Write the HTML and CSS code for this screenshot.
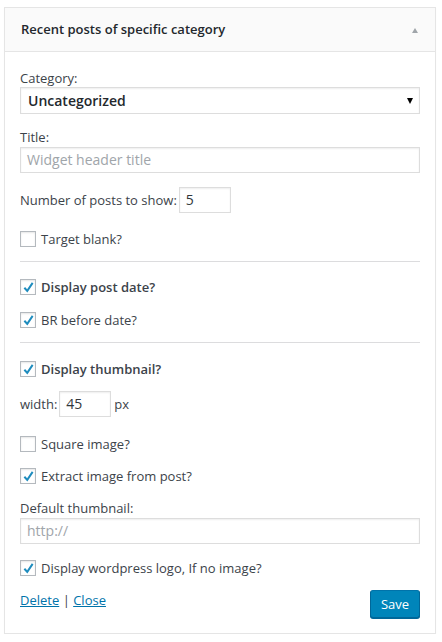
FILE: index.html
```html
<!DOCTYPE html>
<html>
<head>
<meta charset="utf-8">
<link rel="stylesheet" href="styles.css">
</head>
<body>
<div class="widget">
  <div class="widget-top">
    <h3 class="widget-title">Recent posts of specific category</h3>
    <span class="toggle"></span>
  </div>
  <div class="widget-inside">
    <div class="field f-category">
      <label class="lbl">Category:</label>
      <div class="select">Uncategorized<span class="sel-arrow"></span></div>
    </div>
    <div class="field f-title">
      <label class="lbl">Title:</label>
      <div class="input wide placeholder">Widget header title</div>
    </div>
    <div class="inline f-num">
      <span>Number of posts to show:</span>
      <div class="input small">5</div>
    </div>
    <div class="check f-target"><span class="cb"></span><span>Target blank?</span></div>
    <div class="sep sep1"></div>
    <div class="check f-date on bold"><span class="cb"><svg viewBox="0 0 16 16"><path d="M2 8.5 L3.8 6.8 L6.3 9.6 L12.1 1 L14.1 2.4 L6.6 13.6 Z"/></svg></span><span>Display post date?</span></div>
    <div class="check f-br on"><span class="cb"><svg viewBox="0 0 16 16"><path d="M2 8.5 L3.8 6.8 L6.3 9.6 L12.1 1 L14.1 2.4 L6.6 13.6 Z"/></svg></span><span>BR before date?</span></div>
    <div class="sep sep2"></div>
    <div class="check f-thumb on bold"><span class="cb"><svg viewBox="0 0 16 16"><path d="M2 8.5 L3.8 6.8 L6.3 9.6 L12.1 1 L14.1 2.4 L6.6 13.6 Z"/></svg></span><span>Display thumbnail?</span></div>
    <div class="inline f-width">
      <span>width:</span>
      <div class="input small">45</div>
      <span class="px">px</span>
    </div>
    <div class="check f-square"><span class="cb"></span><span>Square image?</span></div>
    <div class="check f-extract on"><span class="cb"><svg viewBox="0 0 16 16"><path d="M2 8.5 L3.8 6.8 L6.3 9.6 L12.1 1 L14.1 2.4 L6.6 13.6 Z"/></svg></span><span>Extract image from post?</span></div>
    <div class="field f-default">
      <label class="lbl">Default thumbnail:</label>
      <div class="input wide placeholder">http://</div>
    </div>
    <div class="check f-logo on"><span class="cb"><svg viewBox="0 0 16 16"><path d="M2 8.5 L3.8 6.8 L6.3 9.6 L12.1 1 L14.1 2.4 L6.6 13.6 Z"/></svg></span><span>Display wordpress logo, If no image?</span></div>
    <div class="controls">
      <div class="links"><a href="#">Delete</a> | <a href="#">Close</a></div>
      <button class="save">Save</button>
    </div>
  </div>
</div>
</body>
</html>
```
FILE: styles.css
```css
html, body {
  margin: 0;
  padding: 0;
  background: #fff;
}
body {
  font-family: "Open Sans", "Liberation Sans", sans-serif;
  font-size: 13px;
  line-height: 18px;
  color: #3c434a;
}
.widget {
  margin: 7px 6px 0 4px;
  border: 1px solid #e5e5e5;
  box-shadow: 0 1px 1px rgba(0,0,0,.04);
  background: #fff;
}
.widget-top {
  height: 43px;
  background: #fafafa;
  border-bottom: 1px solid #e5e5e5;
  display: flex;
  align-items: center;
  justify-content: space-between;
  padding: 0 17px 0 16px;
}
.widget-title {
  margin: 0 0 1px;
  font-size: 13px;
  font-weight: 600;
  color: #23282d;
  line-height: 18px;
}
.toggle {
  width: 0;
  height: 0;
  border-left: 3.5px solid transparent;
  border-right: 3.5px solid transparent;
  border-bottom: 5px solid #a0a5aa;
  margin-top: 1px;
}
.widget-inside {
  padding: 17px 15px 15px;
}
.lbl {
  display: block;
  line-height: 18px;
}
.select {
  position: relative;
  height: 25px;
  border: 1px solid #ddd;
  box-shadow: inset 0 1px 2px rgba(0,0,0,.07);
  font-size: 14px;
  font-weight: 600;
  line-height: 25px;
  padding: 0 7px;
  color: #23282d;
}
.sel-arrow {
  position: absolute;
  right: 6px;
  top: 10px;
  width: 0;
  height: 0;
  border-left: 3px solid transparent;
  border-right: 3px solid transparent;
  border-top: 6px solid #000;
}
.input {
  border: 1px solid #ddd;
  box-shadow: inset 0 1px 2px rgba(0,0,0,.07);
  height: 24px;
  line-height: 24px;
  font-size: 14px;
  padding: 0 6px;
  color: #32373c;
  box-sizing: content-box;
}
.input.wide { margin-top: 1px; }
.input.placeholder { color: #a0a5aa; }
.input.small { width: 38px; }
.f-title { margin-top: 14px; }
.inline {
  display: flex;
  align-items: center;
  gap: 2px;
}
.inline .px { margin-left: 1px; }
.f-num { margin-top: 14px; }
.check {
  display: flex;
  align-items: center;
  gap: 5px;
  height: 18px;
}
.check.bold { font-weight: 600; }
.cb {
  width: 14px;
  height: 14px;
  border: 1px solid #b4b9be;
  box-shadow: inset 0 1px 2px rgba(0,0,0,.1);
  background: #fff;
  display: flex;
  align-items: center;
  justify-content: center;
  flex: none;
}
.cb svg {
  width: 16px;
  height: 16px;
  fill: #1e8cbe;
  margin: 1px 0 0 1px;
}
.f-target { margin-top: 17px; }
.sep {
  height: 1px;
  background: #dcdcde;
}
.sep1 { margin-top: 13px; }
.f-date { margin-top: 16px; }
.f-br { margin-top: 15px; }
.sep2 { margin-top: 13px; }
.f-thumb { margin-top: 17px; }
.f-width { margin-top: 13px; }
.f-square { margin-top: 18px; }
.f-extract { margin-top: 14px; }
.f-default { margin-top: 14px; }
.f-logo { margin-top: 15px; }
.controls {
  margin-top: 12px;
  display: flex;
  justify-content: space-between;
  align-items: flex-start;
}
.links { color: #444; padding-top: 2px; }
.links a { color: #0073aa; text-decoration: underline; }
.save {
  font-family: inherit;
  font-size: 13px;
  height: 28px;
  width: 50px;
  padding: 0;
  color: #fff;
  background: #0085ba;
  border: 1px solid #0073aa;
  border-color: #0073aa #006799 #006799;
  border-radius: 3px;
  box-shadow: 0 1px 0 #006799;
  margin-top: 1px;
}
```
